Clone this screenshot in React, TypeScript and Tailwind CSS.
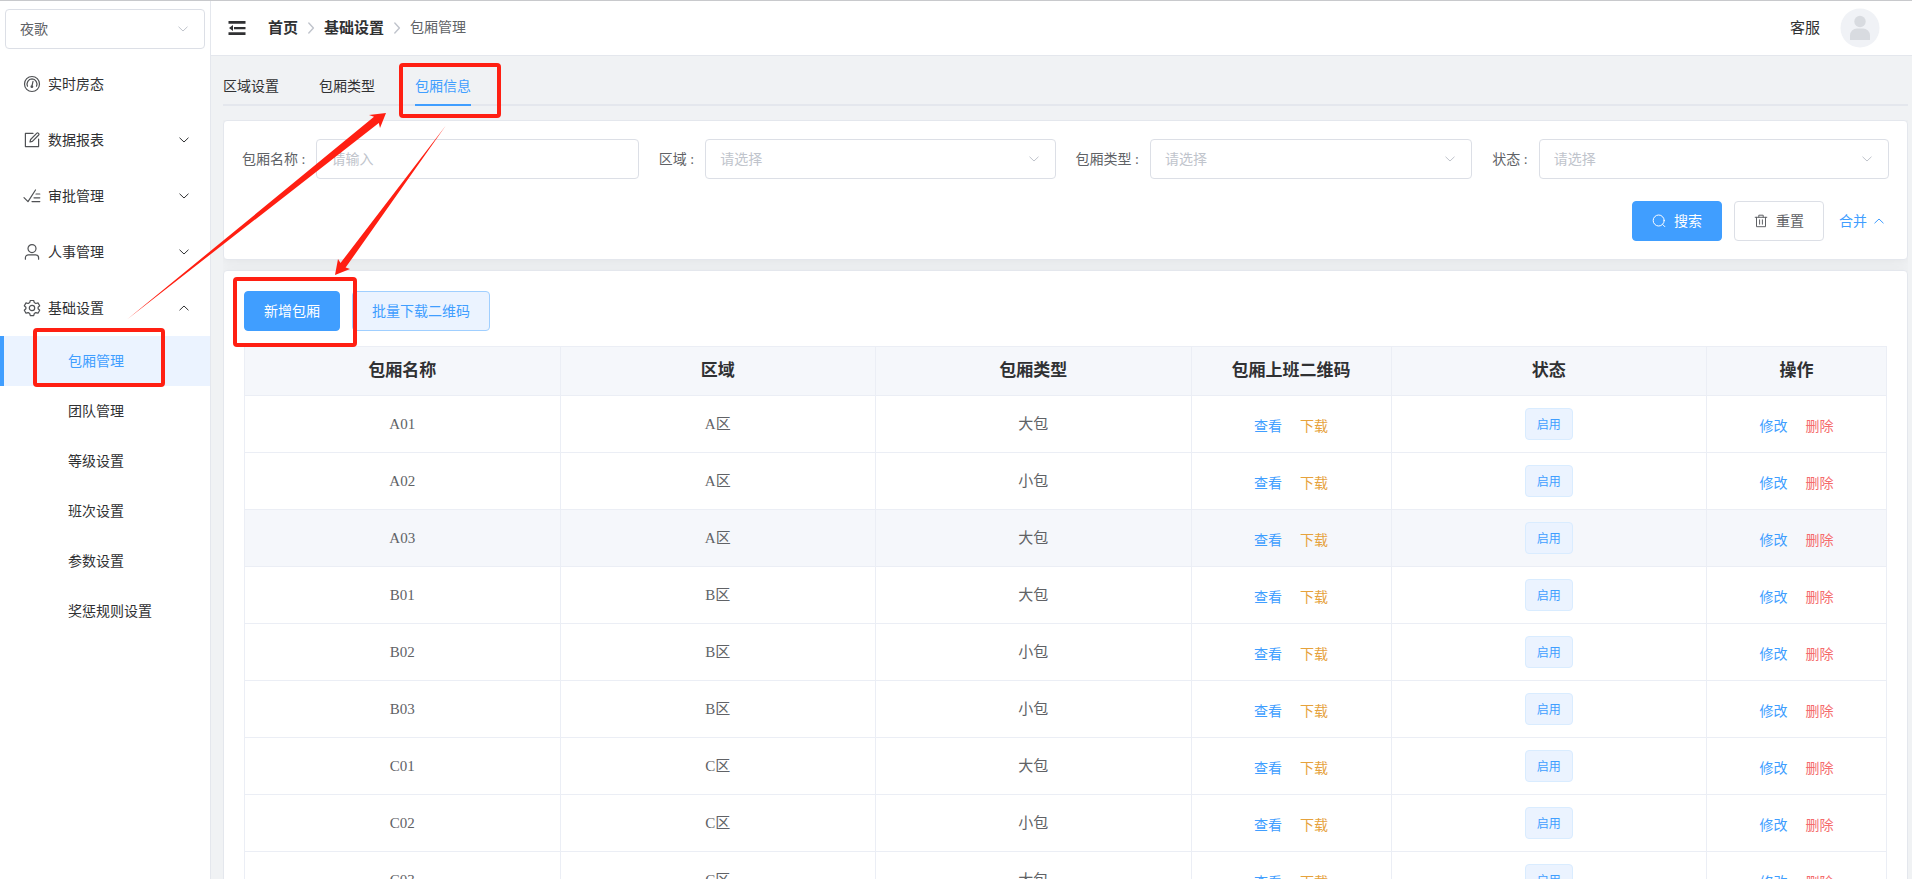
import type { ReactNode } from 'react';

type IconProps = { className?: string };

const ChevronDown = ({ className }: IconProps) => (
  <svg viewBox="0 0 12 12" className={className} fill="none" stroke="currentColor" strokeWidth="1" strokeLinecap="round" strokeLinejoin="round" aria-hidden="true">
    <path d="M1.8 4 6 8 10.2 4" />
  </svg>
);

const ChevronUp = ({ className }: IconProps) => (
  <svg viewBox="0 0 12 12" className={className} fill="none" stroke="currentColor" strokeWidth="1" strokeLinecap="round" strokeLinejoin="round" aria-hidden="true">
    <path d="M1.8 8 6 4l4.2 4" />
  </svg>
);

const ChevronRight = ({ className }: IconProps) => (
  <svg viewBox="0 0 14 14" className={className} fill="none" stroke="currentColor" strokeWidth="1.4" strokeLinecap="round" strokeLinejoin="round" aria-hidden="true">
    <path d="M4.8 2 9.4 7l-4.6 5" />
  </svg>
);

const FoldIcon = ({ className }: IconProps) => (
  <svg viewBox="0 0 18 16" className={className} fill="currentColor" aria-hidden="true">
    <path d="M.5 1h17v2.7H.5zM6 6.900h11.500v2.400H6zM.5 12.300h17V15H.5zM1 8.100l4-3v6z" />
  </svg>
);

const OdometerIcon = () => (
  <svg viewBox="0 0 18 18" className="size-[18px]" fill="none" stroke="currentColor" strokeWidth="1.2" strokeLinecap="round" aria-hidden="true">
    <circle cx="9" cy="9" r="7.500" />
    <path d="M4.500 11.200A5.200 5.200 0 0 1 9 3.900a5.200 5.200 0 0 1 4.500 7.300" />
    <path d="M9.100 10.300 10 6.300" />
    <circle cx="8.900" cy="11.700" r="1.400" fill="currentColor" stroke="none" />
  </svg>
);

const EditIcon = () => (
  <svg viewBox="0 0 18 18" className="size-[18px]" fill="none" stroke="currentColor" strokeWidth="1.2" strokeLinecap="round" strokeLinejoin="round" aria-hidden="true">
    <path d="M10 2.400H2.400v13.200h13.200V8" />
    <path d="m7 11 .6-2.500 6.300-6.300a.9.9 0 0 1 1.300 0l.5.5a.9.9 0 0 1 0 1.300L9.400 10.300z" />
  </svg>
);

const FinishedIcon = () => (
  <svg viewBox="0 0 18 18" className="size-[18px]" fill="none" stroke="currentColor" strokeWidth="1.2" strokeLinecap="round" strokeLinejoin="round" aria-hidden="true">
    <path d="m1 10.600 4 4L12.500 3M13 7h3.800M11 10.800h5.800M9 14.600h7.800" />
  </svg>
);

const UserIcon = () => (
  <svg viewBox="0 0 18 18" className="size-[18px]" fill="none" stroke="currentColor" strokeWidth="1.2" strokeLinecap="round" aria-hidden="true">
    <circle cx="9" cy="5.600" r="4" />
    <path d="M2.400 16.200v-1.400a3 3 0 0 1 3-3h7.200a3 3 0 0 1 3 3v1.400" />
  </svg>
);

const SettingIcon = () => (
  <svg viewBox="0 0 18 18" className="size-[18px]" fill="none" stroke="currentColor" strokeWidth="1.2" strokeLinejoin="round" aria-hidden="true">
    <path d="M7.300 1.500h3.400l.6 2.100 1.500.9 2.200-.6 1.700 2.900-1.600 1.500v1.500l1.600 1.500-1.700 2.900-2.200-.6-1.500.9-.6 2.100H7.300l-.6-2.100-1.500-.9-2.200.6-1.700-2.900 1.600-1.500V8.300L1.300 6.800 3 3.900l2.200.6 1.500-.9z" />
    <circle cx="9" cy="9" r="2.700" />
  </svg>
);

const SearchIcon = () => (
  <svg viewBox="0 0 14 14" className="size-[14px]" fill="none" stroke="currentColor" strokeWidth="1" strokeLinecap="round" aria-hidden="true">
    <circle cx="6.700" cy="6.500" r="5.500" />
    <path d="m10.800 10.600 2 2" />
  </svg>
);

const TrashIcon = () => (
  <svg viewBox="0 0 14 14" className="size-[14px]" fill="none" stroke="currentColor" strokeWidth="1" strokeLinecap="round" strokeLinejoin="round" aria-hidden="true">
    <path d="M1.200 3.300h11.600M2.500 3.300v9.400h9V3.300M4.800 3.300V1.200h4.400v2.100M5.600 5.800v4.400M8.400 5.800v4.400" />
  </svg>
);

const menu: { label: string; icon: ReactNode; open?: boolean }[] = [
  { label: '实时房态', icon: <OdometerIcon /> },
  { label: '数据报表', icon: <EditIcon />, open: false },
  { label: '审批管理', icon: <FinishedIcon />, open: false },
  { label: '人事管理', icon: <UserIcon />, open: false },
  { label: '基础设置', icon: <SettingIcon />, open: true },
];

const subMenu = ['包厢管理', '团队管理', '等级设置', '班次设置', '参数设置', '奖惩规则设置'];

const tabs = ['区域设置', '包厢类型', '包厢信息'];

const rooms = [
  ['A01', 'A区', '大包'],
  ['A02', 'A区', '小包'],
  ['A03', 'A区', '大包'],
  ['B01', 'B区', '大包'],
  ['B02', 'B区', '小包'],
  ['B03', 'B区', '小包'],
  ['C01', 'C区', '大包'],
  ['C02', 'C区', '小包'],
  ['C03', 'C区', '大包'],
];

const headers = ['包厢名称', '区域', '包厢类型', '包厢上班二维码', '状态', '操作'];

function Sidebar() {
  return (
    <aside className="w-[211px] shrink-0 border-r border-[#e4e7ed] bg-white">
      <div className="relative mx-[5px] mt-2">
        <select aria-label="门店" className="h-10 w-full appearance-none rounded border border-[#dcdfe6] bg-white px-[14px] pt-[2px] text-sm text-[#606266]">
          <option>夜歌</option>
        </select>
        <ChevronDown className="pointer-events-none absolute top-[14px] right-4 size-3 text-[#c0c4cc]" />
      </div>
      <nav className="mt-[7px]">
        {menu.map((m) => (
          <button key={m.label} type="button" aria-expanded={m.open} className="flex h-14 w-full items-center gap-[7px] pr-5 pl-[23px] text-sm text-[#303133]">
            <span className="text-[#505255]">{m.icon}</span>
            <span className="pt-[2px]">{m.label}</span>
            {m.open === undefined ? null : m.open ? (
              <ChevronUp className="ml-auto size-3" />
            ) : (
              <ChevronDown className="ml-auto size-3" />
            )}
          </button>
        ))}
        {subMenu.map((s, i) => (
          <a
            key={s}
            href="#"
            className={
              i === 0
                ? 'flex h-[50px] items-center border-l-4 border-[#409eff] bg-[#ebf3ff] pt-[2px] pl-16 text-sm text-[#409eff]'
                : 'flex h-[50px] items-center pt-[2px] pl-[68px] text-sm text-[#303133]'
            }
          >
            {s}
          </a>
        ))}
      </nav>
    </aside>
  );
}

function Header() {
  return (
    <header className="flex h-[55px] shrink-0 items-center border-b border-[#e4e7ed] bg-white pr-8 pl-[17px]">
      <button type="button" aria-label="收起菜单" className="text-[#303133]">
        <FoldIcon className="h-4 w-[18px]" />
      </button>
      <nav className="ml-[22px] flex items-center gap-[6px] text-[#303133]">
        <a href="#" className="text-[15px] font-bold">首页</a>
        <ChevronRight className="size-[14px] text-[#c0c4cc]" />
        <a href="#" className="text-[15px] font-bold">基础设置</a>
        <ChevronRight className="size-[14px] text-[#c0c4cc]" />
        <span className="text-sm text-[#606266]">包厢管理</span>
      </nav>
      <span className="ml-auto text-[15px] text-[#303133]">客服</span>
      <svg viewBox="0 0 40 40" className="ml-5 size-10" aria-hidden="true">
        <circle cx="20" cy="20" r="19.500" fill="#f0f2f6" />
        <circle cx="20" cy="13.500" r="5.700" fill="#d8dbe0" />
        <path d="M10 32v-4.500a7 7 0 0 1 7-7h6a7 7 0 0 1 7 7V32z" fill="#d8dbe0" />
      </svg>
    </header>
  );
}

function Field({ id, label, children }: { id: string; label: string; children: ReactNode }) {
  return (
    <div className="flex items-center text-sm">
      <label htmlFor={id} className="shrink-0 pt-[2px] pr-[11px] text-[#606266]">
        {label} :
      </label>
      <div className="relative flex-1">{children}</div>
    </div>
  );
}

function SelectField({ id, label }: { id: string; label: string }) {
  return (
    <Field id={id} label={label}>
      <select id={id} className="h-10 w-full appearance-none rounded border border-[#dcdfe6] bg-white px-[14px] pt-[2px] text-[#c0c4cc]">
        <option>请选择</option>
      </select>
      <ChevronDown className="pointer-events-none absolute top-[14px] right-4 size-3 text-[#c0c4cc]" />
    </Field>
  );
}

function Filters() {
  return (
    <section className="rounded border border-[#e4e7ed] bg-white p-[18px] shadow-[0_2px_12px_rgba(0,0,0,0.06)]">
      <form className="grid gap-[22px]" onSubmit={(e) => e.preventDefault()}>
        <div className="grid grid-cols-4 gap-5">
          <Field id="room-name" label="包厢名称">
            <input id="room-name" placeholder="请输入" className="h-10 w-full rounded border border-[#dcdfe6] px-[14px] pt-[2px] placeholder:text-[#c0c4cc]" />
          </Field>
          <SelectField id="area" label="区域" />
          <SelectField id="room-type" label="包厢类型" />
          <SelectField id="status" label="状态" />
        </div>
        <div className="flex justify-end gap-3 text-sm">
          <button type="submit" className="flex h-10 items-center gap-2 rounded border border-[#409eff] bg-[#409eff] px-[19px] text-white">
            <SearchIcon />
            <span className="pt-[2px]">搜索</span>
          </button>
          <button type="button" className="flex h-10 items-center gap-2 rounded border border-[#dcdfe6] bg-white px-[19px] text-[#606266]">
            <TrashIcon />
            <span className="pt-[2px]">重置</span>
          </button>
          <button type="button" className="flex h-10 items-center gap-[6px] pr-1 pl-[3px] text-[#409eff]">
            <span className="pt-[2px]">合并</span>
            <ChevronUp className="size-3" />
          </button>
        </div>
      </form>
    </section>
  );
}

function RoomTable() {
  return (
    <table className="w-full table-fixed border-separate border-spacing-0 border-t border-l border-[#ebeef5]">
      <colgroup>
        <col />
        <col />
        <col />
        <col className="w-[200px]" />
        <col />
        <col className="w-[180px]" />
      </colgroup>
      <thead>
        <tr>
          {headers.map((h) => (
            <th key={h} className="h-[49px] border-r border-b border-[#ebeef5] bg-[#f5f7fb] p-0 text-[17px] leading-6 font-bold text-[#303133]">
              {h}
            </th>
          ))}
        </tr>
      </thead>
      <tbody>
        {rooms.map(([name, area, type]) => (
          <tr key={name} className={name === 'A03' ? 'bg-[#f5f7fb]' : 'bg-white'}>
            {[name, area, type].map((v) => (
              <td key={v} className="h-[57px] border-r border-b border-[#ebeef5] p-0 text-center text-[15px] leading-6 text-[#606266]">
                {v}
              </td>
            ))}
            <td className="border-r border-b border-[#ebeef5] p-0 text-sm">
              <div className="flex justify-center gap-[18px] pt-[6px]">
                <button type="button" className="text-[#409eff]">查看</button>
                <button type="button" className="text-[#e6a23c]">下载</button>
              </div>
            </td>
            <td className="border-r border-b border-[#ebeef5] p-0">
              <span className="mx-auto flex h-8 w-12 items-center justify-center rounded border border-[#d9ecff] bg-[#ebf3ff] pt-[2px] text-xs text-[#409eff]">
                启用
              </span>
            </td>
            <td className="border-r border-b border-[#ebeef5] p-0 text-sm">
              <div className="flex justify-center gap-[18px] pt-[6px]">
                <button type="button" className="text-[#409eff]">修改</button>
                <button type="button" className="text-[#f56c6c]">删除</button>
              </div>
            </td>
          </tr>
        ))}
      </tbody>
    </table>
  );
}

function Annotations() {
  return (
    <div className="pointer-events-none absolute inset-0">
      <div className="absolute top-[327px] left-[33px] h-[59px] w-[132px] rounded-[4px] border-4 border-[#ff1f12]" />
      <div className="absolute top-[62px] left-[399px] h-[55px] w-[102px] rounded-[4px] border-4 border-[#ff1f12]" />
      <div className="absolute top-[276px] left-[233px] h-[70px] w-[124px] rounded-[4px] border-4 border-[#ff1f12]" />
      <svg width="520" height="340" viewBox="0 1 520 340" className="absolute top-0 left-0" fill="#ff1f12" aria-hidden="true">
        <path d="M127 319.500 374 116.800 369 115l17-2-6 15-1.200-5z" />
        <path d="M445.500 126 340.500 263 338 259l-3 16 15-6-4.400-1.400z" />
      </svg>
    </div>
  );
}

export default function App() {
  return (
    <div className="relative flex h-screen overflow-hidden border-t border-[#c8c9cc] bg-[#f0f2f4] font-['Liberation_Serif','Noto_Sans_CJK_SC',serif]">
      <Sidebar />
      <div className="flex min-w-0 flex-1 flex-col">
        <Header />
        <main className="min-h-0 flex-1 overflow-hidden pt-[10px] pr-1 pl-3">
          <div className="flex h-10 gap-10 border-b-2 border-[#e4e7ed] text-sm" role="tablist">
            {tabs.map((t, i) => (
              <button
                key={t}
                type="button"
                role="tab"
                aria-selected={i === 2}
                className={
                  i === 2
                    ? '-mb-[2px] h-10 border-b-2 border-[#409eff] pt-[3px] text-[#409eff]'
                    : '-mb-[2px] h-10 border-b-2 border-transparent pt-[3px] text-[#303133]'
                }
              >
                {t}
              </button>
            ))}
          </div>
          <div className="mt-[14px] grid gap-[10px] overflow-hidden">
            <Filters />
            <section className="rounded border border-[#e4e7ed] bg-white p-5 shadow-[0_2px_12px_rgba(0,0,0,0.06)]">
              <div className="mb-[15px] flex gap-3 text-sm">
                <button type="button" className="h-10 rounded border border-[#409eff] bg-[#409eff] px-[19px] pt-[2px] text-white">新增包厢</button>
                <button type="button" className="h-10 rounded border border-[#a0cfff] bg-[#ebf3ff] px-[19px] pt-[2px] text-[#409eff]">批量下载二维码</button>
              </div>
              <RoomTable />
            </section>
          </div>
        </main>
      </div>
      <Annotations />
    </div>
  );
}
